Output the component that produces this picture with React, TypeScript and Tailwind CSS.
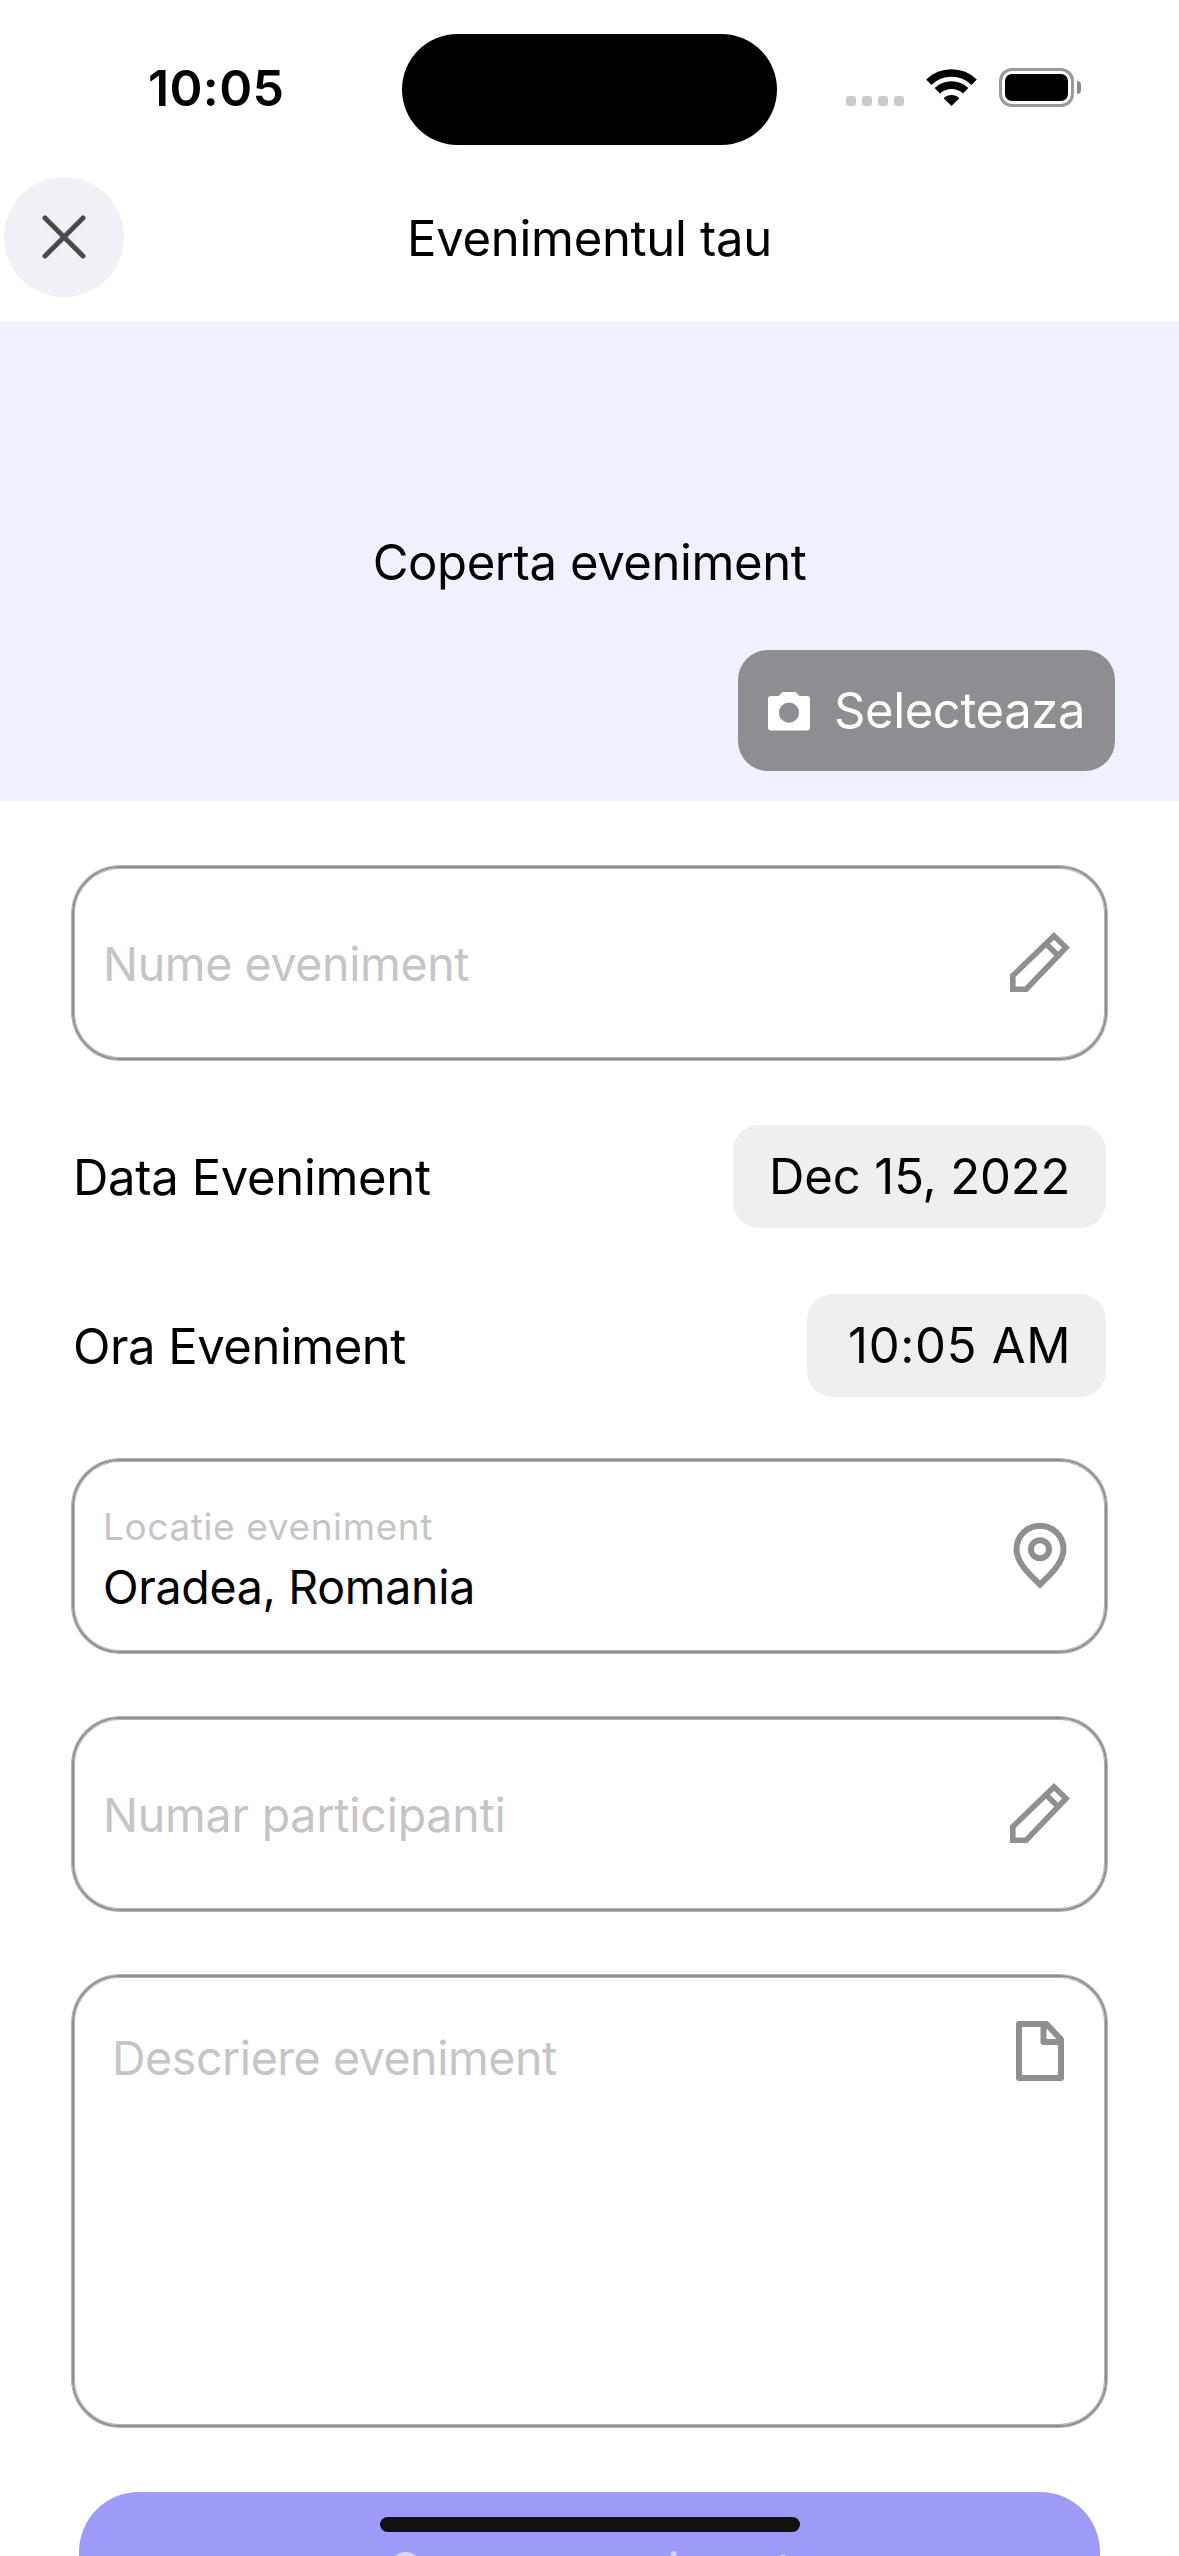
import React, { ReactNode } from "react";

function StatusBar() {
  return (
    <div className="flex h-[177px] shrink-0 items-center">
      <div className="w-[402px] pb-[2px] pl-[148px] text-[50px] font-semibold leading-[60px] tracking-[0.36px]">10:05</div>
      <div className="mt-px h-[111px] w-[375px] rounded-full bg-black" />
      <div className="mb-[2px] flex h-[39px] items-end pl-[69px]">
        <div className="flex gap-[6px] pb-px">
          {[0, 1, 2, 3].map((i) => (
            <span key={i} className="size-[10px] rounded-[3px] bg-[#cacaca]" />
          ))}
        </div>
        <svg className="mb-px ml-[22px] h-[37px] w-[51px]" viewBox="0 0 51 37">
          <g fill="none" stroke="#000" strokeWidth="7.6">
            <path d="M2.8 13.2A32.6 32.6 0 0 1 48.2 13.2" />
            <path d="M11.3 21.8A20.5 20.5 0 0 1 39.7 21.8" />
          </g>
          <path d="M25.500 37L17.700 29.200A11.300 11.300 0 0 1 33.300 29.200Z" fill="#000" />
        </svg>
        <div className="ml-[22px] flex items-center">
          <div className="h-[39px] w-[75px] rounded-[13px] border-3 border-[#999] p-[3px]">
            <div className="size-full rounded-[7px] bg-black" />
          </div>
          <div className="ml-[3px] h-[13px] w-[4px] rounded-r-full bg-[#8a8a8a]" />
        </div>
      </div>
    </div>
  );
}

function Header() {
  return (
    <header className="grid h-[144px] shrink-0">
      <h1 className="col-start-1 row-start-1 h-[120px] pt-px text-center text-[49px] font-normal leading-[121px] tracking-[-0.3px]">
        Evenimentul tau
      </h1>
      <button className="col-start-1 row-start-1 ml-[4px] flex size-[120px] items-center justify-center rounded-full bg-[#f0f1f6]">
        <svg className="size-[46px]" viewBox="0 0 46 46" fill="none" stroke="#4a4a4b" strokeWidth="5" strokeLinecap="round">
          <path d="M4 4L42 42M42 4L4 42" />
        </svg>
      </button>
    </header>
  );
}

function Cover() {
  return (
    <section className="grid h-[480px] shrink-0 bg-[#f0f1ff]">
      <p className="col-start-1 row-start-1 self-center pt-[3px] text-center text-[49px] leading-[60px] tracking-[-0.41px]">
        Coperta eveniment
      </p>
      <button className="col-start-1 row-start-1 mb-[30px] mr-[64px] flex h-[121px] w-[377px] items-center self-end justify-self-end rounded-[30px] bg-[#8e8d92] pl-[30px] text-white">
        <svg className="mt-[2px] h-[39px] w-[42px]" viewBox="0 0 42 39">
          <path
            fill="#fff"
            fillRule="evenodd"
            d="M14.500 0H27.500L31.500 4H39Q42 4 42 7V35.500Q42 38.500 39 38.500H3Q0 38.500 0 35.500V7Q0 4 3 4H10.500ZM21 10.600A10.100 10.100 0 1 0 21 30.800A10.100 10.100 0 1 0 21 10.600Z"
          />
        </svg>
        <span className="ml-[24px] pt-px text-[49px] leading-[60px] tracking-[-0.4px]">Selecteaza</span>
      </button>
    </section>
  );
}

function Field({ className, children, icon }: { className: string; children: ReactNode; icon: ReactNode }) {
  return (
    <div
      className={
        "flex w-full justify-between rounded-[48px] border-2 border-[#8e8e93] pl-[29px] pr-[35px] shadow-[0_0_0_1px_#8e8e93a6,inset_0_0_0_1px_#8e8e93a6] " +
        className
      }
    >
      {children}
      {icon}
    </div>
  );
}

const iconProps = { fill: "none", stroke: "#8e8e93" };

function Pencil() {
  return (
    <svg className="-mt-[2px] size-[60px]" viewBox="0 0 60 60" {...iconProps} strokeWidth="5.6">
      <path d="M2.800 43.800L44 4L56 15.500L16.200 57.200H2.800ZM36 11.800L48.500 24" />
    </svg>
  );
}

function Pin() {
  return (
    <svg className="h-[66px] w-[60px]" viewBox="0 0 60 66" {...iconProps} strokeWidth="6">
      <path d="M30 61.500C21 53 6.500 40 6.500 26.300A23.500 23.500 0 0 1 53.500 26.300C53.500 40 39 53 30 61.500Z" />
      <circle cx="30" cy="26.300" r="9" />
    </svg>
  );
}

function Page() {
  return (
    <svg className="mt-[44px] size-[60px]" viewBox="0 0 60 60" {...iconProps} strokeWidth="6" strokeLinejoin="round">
      <path d="M9 3H36.500L51 18.500V57H9ZM33.500 3V21H51" />
    </svg>
  );
}

function DateRow({ label, labelClass, value, pillClass }: { label: string; labelClass: string; value: string; pillClass: string }) {
  return (
    <div className="flex h-[103px] items-center justify-between text-[49px] leading-[60px]">
      <span className={"pt-[2px] " + labelClass}>{label}</span>
      <span className={"flex h-full items-center rounded-[26px] bg-[#efeff0] pt-px " + pillClass}>{value}</span>
    </div>
  );
}

export default function App() {
  return (
    <div className="relative flex h-[2556px] w-[1179px] flex-col overflow-hidden bg-white font-[Inter,sans-serif] text-black">
      <StatusBar />
      <Header />
      <Cover />
      <main className="flex shrink-0 flex-col pl-[72px] pr-[72px] pt-[65px]">
        <Field className="h-[194px] items-center" icon={<Pencil />}>
          <span className="pt-[2px] text-[46.5px] leading-[60px] tracking-[-0.37px] text-[#c5c5c7]">Nume eveniment</span>
        </Field>
        <div className="mt-[65px] flex flex-col gap-[66px] pr-px">
          <DateRow
            label="Data Eveniment"
            labelClass="pl-px tracking-[-0.34px]"
            value="Dec 15, 2022"
            pillClass="w-[373px] pl-[36px] tracking-[-0.1px]"
          />
          <DateRow
            label="Ora Eveniment"
            labelClass="pl-[1px] tracking-[-0.48px]"
            value="10:05 AM"
            pillClass="w-[299px] pl-[41px] tracking-[0.72px]"
          />
        </div>
        <div className="mt-[62px] flex flex-col gap-[64px]">
          <Field className="h-[194px] items-center" icon={<Pin />}>
            <div className="flex flex-col pt-[2px]">
              <span className="text-[37px] leading-[61px] tracking-[0.61px] text-[#c5c5c7]">Locatie eveniment</span>
              <span className="text-[46.5px] leading-[61px] tracking-[-0.31px]">Oradea, Romania</span>
            </div>
          </Field>
          <Field className="h-[194px] items-center" icon={<Pencil />}>
            <span className="pt-[2px] text-[46.5px] leading-[60px] tracking-[-0.22px] text-[#c5c5c7]">Numar participanti</span>
          </Field>
          <Field className="h-[452px] items-start" icon={<Page />}>
            <span className="pl-[9px] pt-[51px] text-[46.5px] leading-[60px] tracking-[-0.44px] text-[#c5c5c7]">
              Descriere eveniment
            </span>
          </Field>
          <button className="ml-[7px] mt-[1px] h-[156px] w-[1021px] rounded-[60px] bg-[#9e9af8] text-[48px] tracking-[-0.35px] text-white/60">
            Creaza eveniment
          </button>
        </div>
      </main>
      <div className="absolute bottom-[24px] left-[380px] h-[15px] w-[420px] rounded-full bg-[#121212]" />
    </div>
  );
}
